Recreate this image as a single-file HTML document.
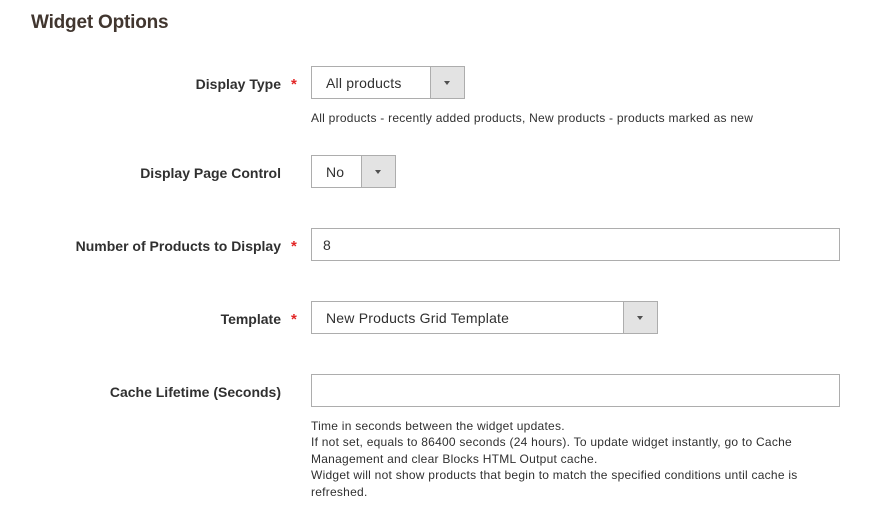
<!DOCTYPE html>
<html><head><style>
body{margin:0;width:872px;height:520px;background:#fff;font-family:"Liberation Sans",Arial,sans-serif;color:#303030;position:relative;overflow:hidden}
h1{position:absolute;left:31px;top:12px;margin:0;font-size:19px;font-weight:bold;color:#41362f;letter-spacing:-0.2px}
.lab{position:absolute;right:591px;font-size:14px;font-weight:bold;color:#303030;white-space:nowrap}
.req{position:absolute;left:291px;color:#e22626;font-size:15px;font-weight:bold}
.box{position:absolute;border:1px solid #adadad;background:#fff;box-sizing:border-box;height:33px;font-size:14px;line-height:33px;padding-left:14px;color:#303030;letter-spacing:0.2px}
.btn{position:absolute;top:0;right:0;width:33px;height:31px;background:#e3e3e3;border-left:1px solid #adadad}
.btn:after{content:"";position:absolute;left:13px;top:14px;border-left:3.5px solid transparent;border-right:3.5px solid transparent;border-top:4px solid #505050}
.note{position:absolute;left:311px;font-size:12px;line-height:16.4px;color:#303030;letter-spacing:0.25px}
</style></head><body>
<h1>Widget Options</h1>

<div class="lab" style="top:76px">Display Type</div><div class="req" style="top:76px">*</div>
<div class="box" style="left:311px;top:66px;width:154px">All products<div class="btn"></div></div>
<div class="note" style="top:110px">All products - recently added products, New products - products marked as new</div>

<div class="lab" style="top:165px">Display Page Control</div>
<div class="box" style="left:311px;top:155px;width:85px">No<div class="btn"></div></div>

<div class="lab" style="top:238px">Number of Products to Display</div><div class="req" style="top:238px">*</div>
<div class="box" style="left:311px;top:228px;width:529px;padding-left:11px">8</div>

<div class="lab" style="top:311px">Template</div><div class="req" style="top:311px">*</div>
<div class="box" style="left:311px;top:301px;width:347px">New Products Grid Template<div class="btn"></div></div>

<div class="lab" style="top:384px">Cache Lifetime (Seconds)</div>
<div class="box" style="left:311px;top:374px;width:529px"></div>
<div class="note" style="top:418px;width:510px">Time in seconds between the widget updates.<br>If not set, equals to 86400 seconds (24 hours). To update widget instantly, go to Cache Management and clear Blocks HTML Output cache.<br>Widget will not show products that begin to match the specified conditions until cache is refreshed.</div>
</body></html>
